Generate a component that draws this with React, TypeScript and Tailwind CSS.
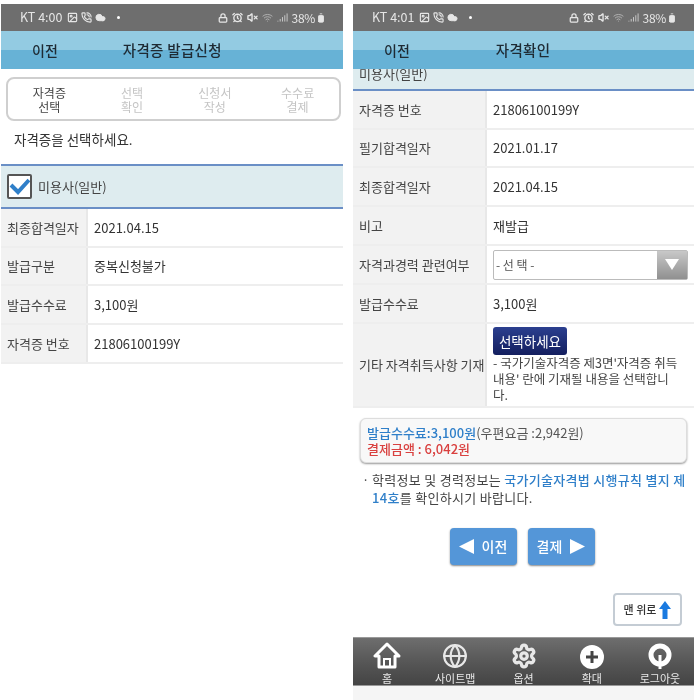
import { AlarmClock, Image, Lock, VolumeX, Cloud, Signal, BatteryFull, PhoneCall, Wifi, Globe, Settings } from 'lucide-react';

const font = 'font-["Noto_Sans_CJK_KR","Noto_Sans",sans-serif]';

function StatusBar({ time }: { time: string }) {
  return (
    <div className="flex h-[27px] items-center bg-[#6e6e6e] pl-[19px] pr-[17px] text-[#e6e6e6]">
      <span className="text-[12.5px] leading-none">KT {time}</span>
      <div className="ml-[5px] flex items-center gap-[3px]">
        <Image size={11} strokeWidth={2.5} />
        <PhoneCall size={11} strokeWidth={2.5} />
        <Cloud size={11} fill="currentColor" />
        <span className="ml-[8px] h-[3px] w-[3px] rounded-full bg-white" />
      </div>
      <div className="ml-auto flex items-center gap-[4px]">
        <Lock size={10} strokeWidth={3} />
        <AlarmClock size={11} strokeWidth={3} />
        <VolumeX size={11} strokeWidth={3} />
        <Wifi size={11} className="opacity-60" />
        <Signal size={11} className="opacity-80" />
        <span className="text-[12px] leading-none tracking-tight">38%</span>
        <BatteryFull size={10} className="-ml-[3px] -rotate-90" fill="currentColor" />
      </div>
    </div>
  );
}

function Header({ title, titleClass }: { title: string; titleClass: string }) {
  return (
    <div className="flex h-[38px] items-center bg-[linear-gradient(#93cbe2_0,#93cbe2_50%,#67b2d6_50%,#67b2d6_100%)] text-[14px] font-medium text-[#1e2a33]">
      <span className="ml-[31px]">이전</span>
      <span className={titleClass}>{title}</span>
    </div>
  );
}

function Row({ label, labelWidth, h, children }: { label: string; labelWidth: string; h: string; children: React.ReactNode }) {
  return (
    <div className={`flex border-b-2 border-[#eeeeee] text-[13px] text-[#333] ${h}`}>
      <div className={`flex shrink-0 items-center whitespace-nowrap border-r-2 border-[#e8e8e8] bg-[#f2f2f2] pl-[6px] text-[#444] ${labelWidth}`}>{label}</div>
      <div className="flex flex-1 items-center pl-[6px]">{children}</div>
    </div>
  );
}

function LeftPhone() {
  const steps = [
    { a: '자격증', b: '선택', on: true },
    { a: '선택', b: '확인', on: false },
    { a: '신청서', b: '작성', on: false },
    { a: '수수료', b: '결제', on: false },
  ];
  return (
    <div className="w-[342px] shrink-0">
      <StatusBar time="4:00" />
      <Header title="자격증 발급신청" titleClass="ml-[65px] text-[14.5px] tracking-[0.3px]" />
      <div className="ml-[5px] mr-[2px] mt-[8px] flex h-[44px] rounded-[8px] border-2 border-[#cfcfcf]">
        {steps.map(s => (
          <div key={s.a} className={`flex flex-1 flex-col items-center justify-center pt-[1px] text-[12px] leading-[14px] ${s.on ? 'text-[#444]' : 'text-[#c4c4c4]'}`}>
            <span>{s.a}</span>
            <span>{s.b}</span>
          </div>
        ))}
      </div>
      <p className="mt-[8px] pl-[13px] text-[13.5px] leading-[20px] text-[#333]">자격증을 선택하세요.</p>
      <div className="mt-[15px] flex h-[45px] items-center gap-[6px] border-y-2 border-[#6a8fc6] bg-[#deecef] pl-[6px] text-[13px] text-[#444]">
        <span className="flex h-[25px] w-[25px] items-center justify-center rounded-[2px] border-2 border-[#555] bg-white">
          <svg width="21" height="17" viewBox="0 0 21 17">
            <path d="M2 7l7 7L20 2" fill="none" stroke="#2f7fc9" strokeWidth="4" />
          </svg>
        </span>
        미용사(일반)
      </div>
      <Row label="최종합격일자" labelWidth="w-[87px]" h="h-[39px]">2021.04.15</Row>
      <Row label="발급구분" labelWidth="w-[87px]" h="h-[38px]">중복신청불가</Row>
      <Row label="발급수수료" labelWidth="w-[87px]" h="h-[39px]">3,100원</Row>
      <Row label="자격증 번호" labelWidth="w-[87px]" h="h-[39px]">21806100199Y</Row>
    </div>
  );
}

function NavItem({ icon, label }: { icon: React.ReactNode; label: string }) {
  return (
    <div className="flex w-[68px] flex-col items-center text-[11px] leading-[14px] text-[#e8e8e8]">
      <div className="flex h-[31px] items-end">{icon}</div>
      <span className="mt-[2px]">{label}</span>
    </div>
  );
}

function RightPhone() {
  const lw = 'w-[134px]';
  return (
    <div className="ml-[10px] flex h-[700px] w-[341px] shrink-0 flex-col">
      <StatusBar time="4:01" />
      <Header title="자격확인" titleClass="ml-[86px] text-[14.5px] tracking-[0.3px]" />
      <div className="flex h-[22px] items-start overflow-hidden border-b-2 border-[#6a8fc6] bg-[#deecef] pl-[6px] text-[13px] leading-[14px] text-[#444]">
        <span className="-mt-[2px]">미용사(일반)</span>
      </div>
      <Row label="자격증 번호" labelWidth={lw} h="h-[39px]">21806100199Y</Row>
      <Row label="필기합격일자" labelWidth={lw} h="h-[38px]">2021.01.17</Row>
      <Row label="최종합격일자" labelWidth={lw} h="h-[39px]">2021.04.15</Row>
      <Row label="비고" labelWidth={lw} h="h-[39px]">재발급</Row>
      <Row label="자격과경력 관련여부" labelWidth={lw} h="h-[39px]">
        <div className="flex h-[30px] w-[195px] items-center rounded-[2px] border border-[#bbb] bg-white pl-[2px] text-[12px] text-[#555]">
          - 선 택 -
          <span className="ml-auto flex h-full w-[30px] items-center justify-center bg-[linear-gradient(#c8c8c8,#909090)]">
            <svg width="14" height="11" viewBox="0 0 14 11"><path d="M0 0h14L7 11z" fill="#fff" /></svg>
          </span>
        </div>
      </Row>
      <Row label="발급수수료" labelWidth={lw} h="h-[39px]">3,100원</Row>
      <Row label="기타 자격취득사항 기재" labelWidth={lw} h="h-[84px]">
        <div className="text-[12.5px] leading-[16px] text-[#444]">
          <span className="block w-[74px] rounded-[3px] bg-[linear-gradient(#2b3f8f,#141f5f)] py-[4px] text-center text-[13.5px] leading-[20px] text-white">선택하세요</span>
          <p className="w-[192px]">- 국가기술자격증 제3면'자격증 취득<br />내용' 란에 기재될 내용을 선택합니<br />다.</p>
        </div>
      </Row>
      <div className="mx-[7px] mt-[10px] h-[45px] rounded-[6px] border border-[#ddd] bg-[#f8f8f8] px-[6px] py-[6px] text-[13px] font-medium leading-[16px] shadow-[0_1px_2px_#999]">
        <div>
          <span className="text-[#2f7fc9]">발급수수료:3,100원</span>
          <span className="font-normal text-[#555]">(우편요금 :2,942원)</span>
        </div>
        <div className="text-[#d9403f]">결제금액 : 6,042원</div>
      </div>
      <div className="mt-[8px] flex pl-[9px] pr-[6px] text-[13px] leading-[18px] tracking-[0.3px] text-[#444]">
        <span className="w-[10px] shrink-0">·</span>
        <p>학력정보 및 경력정보는 <span className="font-medium text-[#2f7fc9]">국가기술자격법 시행규칙 별지 제<br />14호</span>를 확인하시기 바랍니다.</p>
      </div>
      <div className="mt-[21px] flex justify-center gap-[11px] pr-[3px] text-[14px] font-medium text-white">
        <button className="flex h-[37px] w-[67px] items-center justify-center gap-[8px] rounded-[4px] bg-[#5496d8] shadow-[0_1px_2px_#888]">
          <svg width="15" height="15" viewBox="0 0 15 15"><path d="M15 0v15L0 7.500z" fill="#fff" /></svg>
          이전
        </button>
        <button className="flex h-[37px] w-[67px] items-center justify-center gap-[8px] rounded-[4px] bg-[#5496d8] shadow-[0_1px_2px_#888]">
          결제
          <svg width="15" height="15" viewBox="0 0 15 15"><path d="M0 0v15l15-7.500z" fill="#fff" /></svg>
        </button>
      </div>
      <div className="mt-[28px] flex justify-end pr-[12px]">
        <button className="flex h-[33px] w-[69px] items-center justify-center gap-[3px] rounded-[4px] border-2 border-[#c4ccd4] bg-white text-[11px] font-medium text-[#333]">
          맨 위로
          <svg width="12" height="18" viewBox="0 0 12 18"><path d="M6 0l6 8H8.500v10h-5V8H0z" fill="#1a7ae0" /></svg>
        </button>
      </div>
      <div className="mt-[11px] flex h-[49px] justify-between border-y border-[#999] bg-[linear-gradient(#6e6e6e,#555_55%,#444)]">
        <NavItem label="홈" icon={
          <svg width="28" height="27" viewBox="0 0 28 27"><path d="M14 2L2 14h4v11h16V14h4z" fill="none" stroke="#fff" strokeWidth="3" strokeLinejoin="round" /><path d="M11 25v-8h6v8" fill="none" stroke="#fff" strokeWidth="2" /></svg>
        } />
        <NavItem label="사이트맵" icon={<Globe size={26} strokeWidth={2} />} />
        <NavItem label="옵션" icon={<Settings size={26} strokeWidth={3} />} />
        <NavItem label="확대" icon={
          <svg width="24" height="24" viewBox="0 0 24 24"><circle cx="12" cy="12" r="12" fill="#fff" /><path d="M12 6v12M6 12h12" stroke="#444" strokeWidth="3" /></svg>
        } />
        <NavItem label="로그아웃" icon={
          <svg width="24" height="26" viewBox="0 0 24 26"><circle cx="12" cy="12" r="9" fill="none" stroke="#fff" strokeWidth="5" /><path d="M12 12v14" stroke="#fff" strokeWidth="3" /></svg>
        } />
      </div>
      <div className="flex-1 bg-[#f5f5f5]" />
    </div>
  );
}

export default function App() {
  return (
    <div className={`flex h-[700px] w-[700px] overflow-hidden bg-white pl-[1px] pt-[4px] blur-[0.4px] ${font}`}>
      <LeftPhone />
      <RightPhone />
    </div>
  );
}
